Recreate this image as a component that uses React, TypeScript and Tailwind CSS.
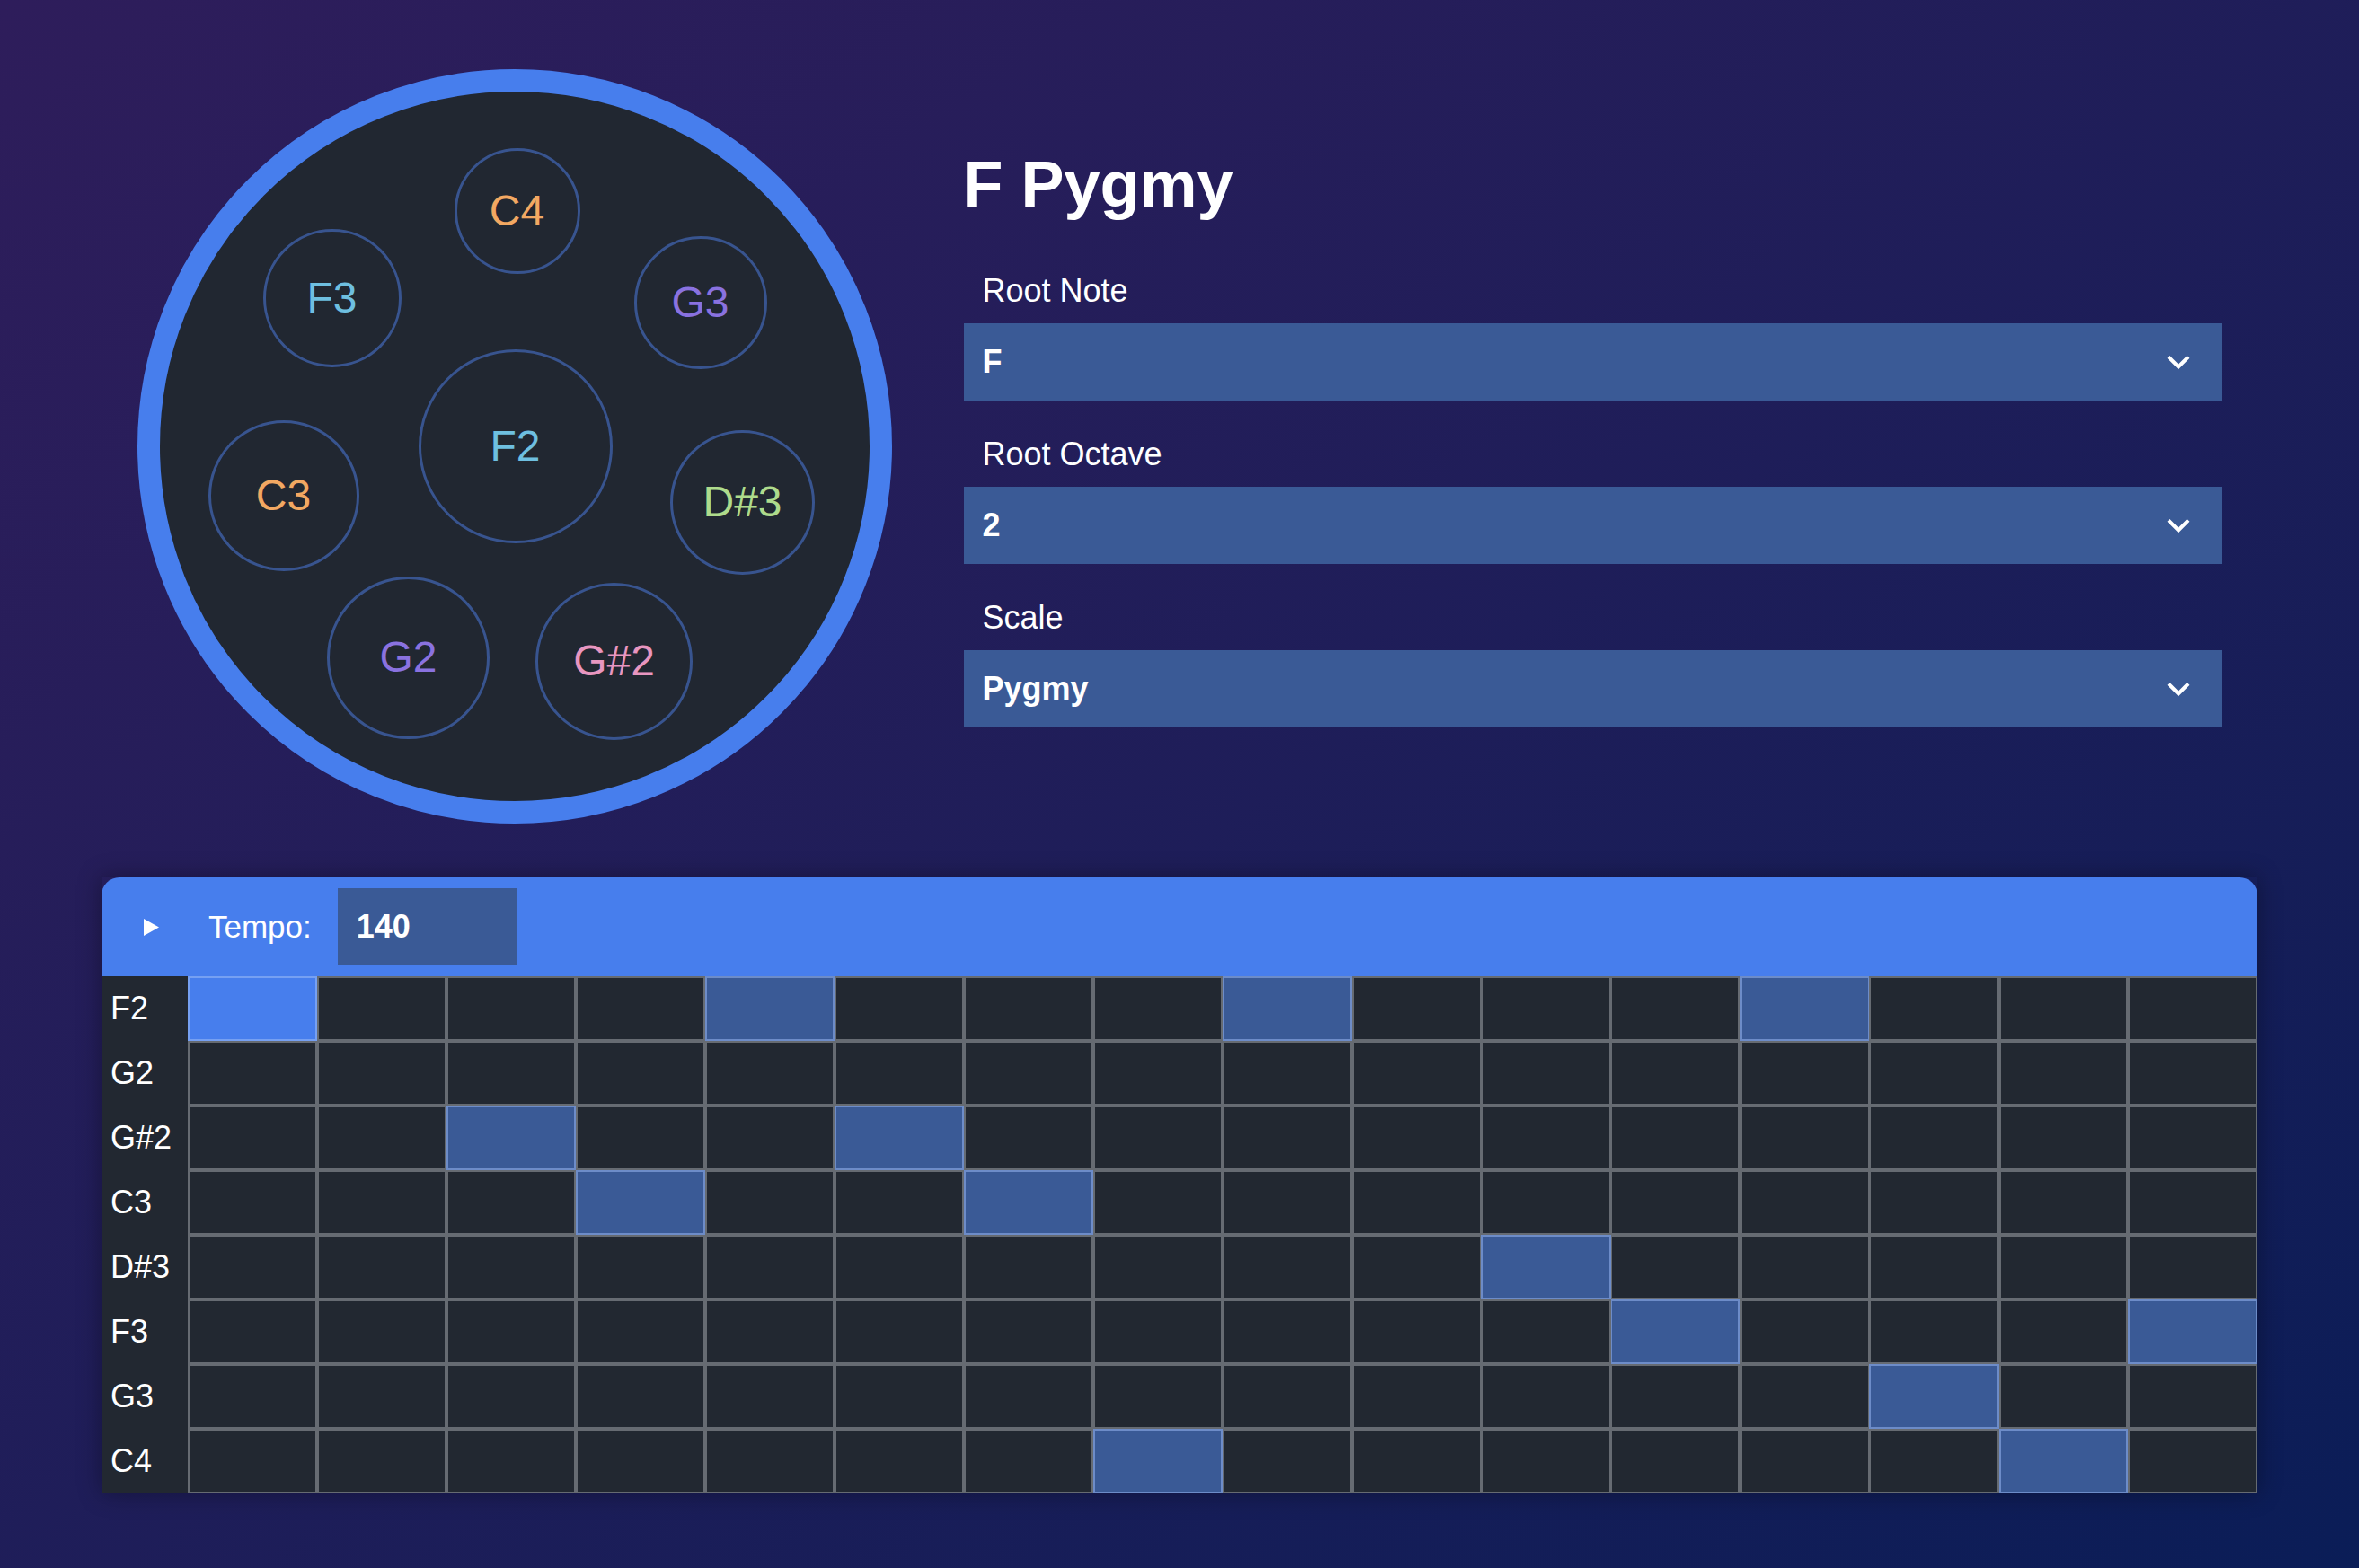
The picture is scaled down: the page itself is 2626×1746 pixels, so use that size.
import React from "react"

const notes = [
  { name: "C4", x: 423, y: 158, d: 140, color: "text-[#f2a862]" },
  { name: "F3", x: 217, y: 255, d: 154, color: "text-[#6ebfe0]" },
  { name: "G3", x: 627, y: 260, d: 148, color: "text-[#8a72e0]" },
  { name: "F2", x: 421, y: 420, d: 216, color: "text-[#6ebfe0]" },
  { name: "C3", x: 163, y: 475, d: 168, color: "text-[#f2a862]" },
  { name: "D#3", x: 674, y: 482, d: 161, color: "text-[#aedb8c]" },
  { name: "G2", x: 302, y: 655, d: 181, color: "text-[#8a72e0]" },
  { name: "G#2", x: 531, y: 659, d: 175, color: "text-[#e896c0]" },
]

const rows = ["F2", "G2", "G#2", "C3", "D#3", "F3", "G3", "C4"]

// active steps per row
const pattern: Record<string, number[]> = {
  F2: [0, 4, 8, 12],
  G2: [],
  "G#2": [2, 5],
  C3: [3, 6],
  "D#3": [10],
  F3: [11, 15],
  G3: [13],
  C4: [7, 14],
}

const fields = [
  { label: "Root Note", value: "F" },
  { label: "Root Octave", value: "2" },
  { label: "Scale", value: "Pygmy" },
]

function Chevron() {
  return (
    <svg width="50" height="50" viewBox="0 0 24 24" fill="white">
      <path d="M16.59 8.59L12 13.17 7.41 8.59 6 10l6 6 6-6z" />
    </svg>
  )
}

function HandPan() {
  return (
    <div className="relative h-[840px] w-[840px] shrink-0 rounded-full border-[25px] border-[#477eed] bg-[#212731]">
      {notes.map((n) => (
        <div
          key={n.name}
          className={`absolute flex items-center justify-center rounded-full border-[3px] border-[#38548f] text-[48px] ${n.color}`}
          style={{ left: n.x - 25 - n.d / 2, top: n.y - 25 - n.d / 2, width: n.d, height: n.d }}
        >
          {n.name}
        </div>
      ))}
    </div>
  )
}

function Sequencer() {
  return (
    <div className="mt-[60px] w-[2400px] shadow-[0_0_24px_rgba(0,0,0,0.35)]">
      {/* Header */}
      <div className="flex h-[110px] items-center rounded-t-[20px] bg-[#477eed] pl-[47px]">
        <svg width="17" height="19" viewBox="0 0 17 19" fill="white">
          <polygon points="0,0 17,9.5 0,19" />
        </svg>
        <span className="ml-[55px] text-[35px]">Tempo:</span>
        <div className="ml-[29px] flex h-[86px] w-[200px] items-center bg-[#3a5a96] pl-[21px] text-[36px] font-bold">
          140
        </div>
      </div>

      {/* Grid */}
      <div className="grid grid-cols-[96px_repeat(16,144px)] bg-[#222831]">
        {rows.map((r) => (
          <React.Fragment key={r}>
            <div className="flex h-[72px] items-center pl-[10px] text-[36px]">{r}</div>
            {Array.from({ length: 16 }).map((_, i) => {
              const on = pattern[r].includes(i)
              const playing = r === "F2" && i === 0
              let cls = "border-[#666b72] bg-[#222831]"
              if (on) cls = "border-[#6d8cc8] bg-[#3a5a96]"
              if (playing) cls = "border-[#76a0f2] bg-[#477eed]"
              return <div key={i} className={`h-[72px] border-2 ${cls}`} />
            })}
          </React.Fragment>
        ))}
      </div>
    </div>
  )
}

export default function App() {
  return (
    <div className="flex min-h-screen w-full flex-col items-center bg-linear-to-br from-[#2e1d5b] to-[#0a1d57] pt-[77px] font-['Liberation_Sans',Arial,sans-serif] text-white">
      <div className="flex w-[2321px] items-start gap-[80px]">
        <HandPan />

        <div className="flex flex-1 flex-col pt-[92px]">
          <h1 className="text-[72px] font-bold leading-none">F Pygmy</h1>
          <div className="mt-[56px] flex flex-col gap-[33px]">
            {fields.map((f) => (
              <div key={f.label} className="flex flex-col">
                <label className="pl-[21px] text-[36px] leading-[54px]">{f.label}</label>
                <div className="mt-[9px] flex h-[86px] items-center justify-between bg-[#3a5a96] pl-[21px] pr-[24px] text-[36px] font-bold">
                  <span>{f.value}</span>
                  <Chevron />
                </div>
              </div>
            ))}
          </div>
        </div>
      </div>

      <Sequencer />
    </div>
  )
}
